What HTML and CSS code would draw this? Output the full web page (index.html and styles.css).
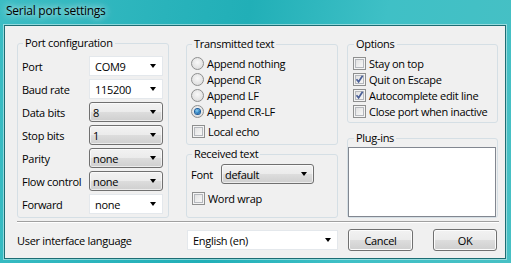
FILE: index.html
```html
<!DOCTYPE html>
<html>
<head>
<meta charset="utf-8">
<link rel="stylesheet" href="styles.css">
</head>
<body>
<div class="window">
  <div class="titlebar"><span class="title">Serial port settings</span></div>
  <div class="client">
    <div class="groups">
      <fieldset class="group g-port">
        <legend>Port configuration</legend>
        <div class="rows">
          <div class="row"><span class="lbl">Port</span><div class="combo edit"><span>COM9</span><i class="arrow"></i></div></div>
          <div class="row"><span class="lbl">Baud rate</span><div class="combo edit"><span>115200</span><i class="arrow"></i></div></div>
          <div class="row"><span class="lbl">Data bits</span><div class="combo list"><span>8</span><i class="arrow"></i></div></div>
          <div class="row"><span class="lbl">Stop bits</span><div class="combo list"><span>1</span><i class="arrow"></i></div></div>
          <div class="row"><span class="lbl">Parity</span><div class="combo list"><span>none</span><i class="arrow"></i></div></div>
          <div class="row"><span class="lbl">Flow control</span><div class="combo list"><span>none</span><i class="arrow"></i></div></div>
          <div class="row"><span class="lbl">Forward</span><div class="combo edit"><span>none</span><i class="arrow"></i></div></div>
        </div>
      </fieldset>
      <div class="col col2">
        <fieldset class="group g-tx">
          <legend>Transmitted text</legend>
          <div class="opt"><i class="radio"></i><span>Append nothing</span></div>
          <div class="opt"><i class="radio"></i><span>Append CR</span></div>
          <div class="opt"><i class="radio"></i><span>Append LF</span></div>
          <div class="opt"><i class="radio on"></i><span>Append CR-LF</span></div>
          <div class="opt opt-echo"><i class="check"></i><span>Local echo</span></div>
        </fieldset>
        <fieldset class="group g-rx">
          <legend>Received text</legend>
          <div class="font-row"><span class="lbl-font">Font</span><div class="combo list combo-font"><span>default</span><i class="arrow"></i></div></div>
          <div class="opt opt-wrap"><i class="check"></i><span>Word wrap</span></div>
        </fieldset>
      </div>
      <div class="col col3">
        <fieldset class="group g-opt">
          <legend>Options</legend>
          <div class="opt"><i class="check"></i><span>Stay on top</span></div>
          <div class="opt"><i class="check on"><svg viewBox="0 0 11 11" width="11" height="11"><path d="M2.5 5.2 L4.6 7.8 L8.6 1.8" fill="none" stroke="#4a5f97" stroke-width="1.7"/></svg></i><span>Quit on Escape</span></div>
          <div class="opt"><i class="check on"><svg viewBox="0 0 11 11" width="11" height="11"><path d="M2.5 5.2 L4.6 7.8 L8.6 1.8" fill="none" stroke="#4a5f97" stroke-width="1.7"/></svg></i><span>Autocomplete edit line</span></div>
          <div class="opt"><i class="check"></i><span>Close port when inactive</span></div>
        </fieldset>
        <fieldset class="group g-plug">
          <legend>Plug-ins</legend>
          <div class="listbox"></div>
        </fieldset>
      </div>
    </div>
    <div class="separator"></div>
    <div class="bottom">
      <span class="lbl-lang">User interface language</span>
      <div class="combo edit combo-lang"><span>English (en)</span><i class="arrow"></i></div>
      <button class="btn btn-cancel">Cancel</button>
      <button class="btn btn-ok">OK</button>
    </div>
  </div>
</div>
</body>
</html>
```
FILE: styles.css
```css
* { box-sizing: border-box; }
html, body { margin: 0; padding: 0; }
body {
  font-family: "Open Sans", "Noto Sans", sans-serif;
  font-size: 11px;
  letter-spacing: -0.3px;
  color: #000;
  background: #2ab4bc;
  white-space: nowrap;
}
.window {
  width: 511px;
  height: 263px;
  padding-left: 4px;
  background: linear-gradient(100deg, #3bbdc4 0%, #29b3bb 30%, #21afb7 45%, #3fc0c6 70%, #47c0c4 100%);
  overflow: hidden;
}
.titlebar {
  height: 25px;
  padding-left: 2px;
  display: flex;
  align-items: center;
}
.title {
  font-size: 12px;
  letter-spacing: -0.25px;
  line-height: 16px;
  margin-top: -3px;
  color: #000;
  text-shadow: 0 0 6px rgba(255,255,255,0.9), 0 0 12px rgba(255,255,255,0.5);
}
.client {
  width: 502px;
  height: 234px;
  background: #f0f0f0;
  border: 1px solid #1d6d73;
  box-shadow: 0 0 0 1px rgba(255,255,255,0.45);
  padding: 9px 6px 0 12px;
}
.groups {
  display: flex;
  height: 183px;
}
.group {
  margin: 0;
  padding: 0 4px;
  border: 1px solid #d5dfe5;
  border-radius: 3px;
  min-width: 0;
}
.group legend {
  padding: 0 2px;
  margin-left: 1px;
  line-height: 16px;
  height: 16px;
}
.g-port {
  width: 152px;
  height: 183px;
  padding-top: 5px;
}
.rows {
  display: flex;
  flex-direction: column;
  gap: 3px;
}
.row {
  display: flex;
  align-items: center;
  height: 20px;
}
.lbl {
  width: 67px;
}
.combo {
  position: relative;
  display: flex;
  align-items: center;
  height: 20px;
  width: 74px;
  padding-left: 5px;
}
.combo.edit {
  background: #fff;
  border: 1px solid #e4e8ec;
}
.combo.list {
  padding-left: 3px;
  border: 1px solid #707070;
  border-radius: 3px;
  background: linear-gradient(#f2f2f2 0%, #ebebeb 50%, #dddddd 50%, #cfcfcf 100%);
  box-shadow: inset 0 0 0 1px rgba(255,255,255,0.6);
}
.arrow {
  position: absolute;
  right: 6px;
  top: 7px;
  width: 0;
  height: 0;
  border-left: 3.5px solid transparent;
  border-right: 3.5px solid transparent;
  border-top: 4px solid #000;
}
.col {
  display: flex;
  flex-direction: column;
}
.col2 {
  width: 152px;
  margin-left: 17px;
  margin-top: 1px;
}
.col3 {
  width: 151px;
  margin-left: 9px;
  margin-top: 1px;
}
.g-tx {
  height: 109px;
  padding-top: 3px;
}
.opt {
  display: flex;
  align-items: center;
  height: 16px;
}
.opt span {
  margin-left: 3px;
}
.radio {
  width: 13px;
  height: 13px;
  border-radius: 50%;
  border: 1px solid #8e8f8f;
  background: radial-gradient(circle at 50% 40%, #f8f8f8 0%, #e4e4e4 60%, #d6d6d6 100%);
  display: flex;
  align-items: center;
  justify-content: center;
}
.radio.on::after {
  content: "";
  width: 5px;
  height: 5px;
  border-radius: 50%;
  background: radial-gradient(circle at 40% 35%, #8fd3f5 0%, #2b7fc0 55%, #0d4a8a 100%);
  box-shadow: 0 0 0 1px #1b5a99;
}
.check {
  width: 13px;
  height: 13px;
  border: 1px solid #8e8f8f;
  background: linear-gradient(135deg, #dcdcdc 0%, #f0f0f0 60%, #fbfbfb 100%);
  box-shadow: inset 0 0 0 1px #f4f4f4, inset 0 0 0 2px #b5b8bd;
  display: flex;
  align-items: center;
  justify-content: center;
}
.check svg { display: block; }
.opt-echo {
  margin-top: 4px;
}
.g-tx .opt-echo .check { margin-left: 1px; }
.g-rx {
  height: 72px;
  margin-top: 1px;
  padding-top: 2px;
}
.font-row {
  display: flex;
  align-items: center;
  height: 20px;
}
.lbl-font {
  width: 30px;
}
.combo-font {
  width: 93px;
}
.opt-wrap {
  margin-top: 6px;
}
.opt-wrap .check { margin-left: 1px; }
.g-opt {
  height: 87px;
  padding-top: 3px;
  padding-left: 5px;
}
.g-plug {
  height: 88px;
  margin-top: 7px;
  padding: 1px 1px 0 0;
  display: flex;
  flex-direction: column;
}
.g-plug legend { margin-left: 6px; }
.listbox {
  height: 70px;
  background: #fff;
  border: 1px solid #828790;
}
.separator {
  margin-top: 3px;
  height: 2px;
  border-top: 1px solid #a0a0a0;
  border-bottom: 1px solid #fff;
}
.bottom {
  display: flex;
  align-items: center;
  height: 22px;
  margin-top: 6px;
}
.lbl-lang {
  width: 170px;
}
.combo-lang {
  width: 151px;
  height: 20px;
}
.btn {
  font-family: inherit;
  font-size: 11px;
  letter-spacing: -0.3px;
  color: #000;
  height: 22px;
  padding: 0;
  border: 1px solid #707070;
  border-radius: 3px;
  background: linear-gradient(#f2f2f2 0%, #ebebeb 50%, #dddddd 50%, #cfcfcf 100%);
  box-shadow: inset 0 0 0 1px #fcfcfc;
}
.btn-cancel {
  width: 65px;
  margin-left: 10px;
}
.btn-ok {
  width: 64px;
  margin-left: 20px;
}
```
